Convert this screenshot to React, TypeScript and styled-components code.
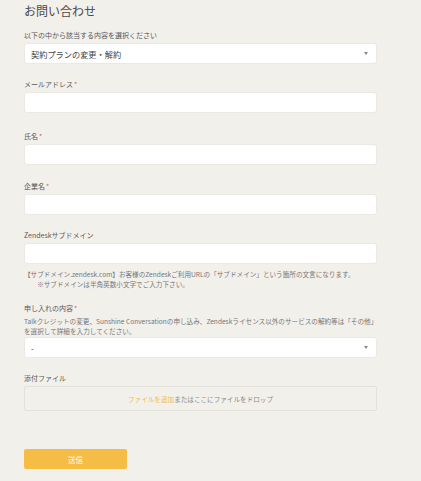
import styled, { createGlobalStyle } from 'styled-components';

const GlobalStyle = createGlobalStyle`
  html, body {
    margin: 0;
    padding: 0;
    background: #f2f0eb;
  }
  body {
    font-family: 'Noto Sans CJK JP', 'Noto Sans', sans-serif;
    color: #555;
  }
`;

const Page = styled.div`
  padding: 0 44px 0 24px;
  width: 353px;
`;

const Title = styled.h1`
  margin: 0 0 7px;
  font-size: 12px;
  line-height: 22px;
  font-weight: 400;
  color: #4a4a4a;
`;

const Field = styled.div<{ $gap?: number }>`
  margin-top: ${(p) => p.$gap ?? 14}px;
`;

const Label = styled.div`
  font-size: 7px;
  line-height: 12px;
  margin-bottom: 2px;
  color: #595959;
`;

const Required = styled.span`
  color: #e5554f;
  margin-left: 1px;
`;

const Input = styled.div`
  height: 21px;
  background: #fff;
  border: 1px solid #ebe9e4;
  border-radius: 3px;
  box-sizing: border-box;
`;

const Select = styled(Input)`
  display: flex;
  align-items: center;
  justify-content: space-between;
  padding: 0 8px 0 6px;
  font-size: 8.2px;
  color: #444;
`;

const Caret = styled.span`
  width: 0;
  height: 0;
  border-left: 2.5px solid transparent;
  border-right: 2.5px solid transparent;
  border-top: 3px solid #888;
`;

const Hint = styled.div<{ $top?: number; $bottom?: number }>`
  margin-top: ${(p) => p.$top ?? 5}px;
  margin-bottom: ${(p) => p.$bottom ?? 0}px;
  font-size: 6.6px;
  line-height: 10px;
  color: #777;
`;

const Drop = styled.div`
  height: 25px;
  border: 1px solid #e3e1dc;
  border-radius: 2px;
  box-sizing: border-box;
  display: flex;
  align-items: center;
  justify-content: center;
  font-size: 6.6px;
  color: #888;
`;

const AddLink = styled.span`
  color: #f5bd45;
`;

const Submit = styled.button`
  margin-top: 38px;
  width: 103px;
  height: 20px;
  border: none;
  border-radius: 2px;
  background: #f5bd45;
  color: #fff;
  font-family: inherit;
  font-size: 7.5px;
  padding: 0;
`;

export default function App() {
  return (
    <Page>
      <GlobalStyle />
      <Title>お問い合わせ</Title>
      <Field $gap={0}>
        <Label>以下の中から該当する内容を選択ください</Label>
        <Select>
          <span>契約プランの変更・解約</span>
          <Caret />
        </Select>
      </Field>
      <Field>
        <Label>
          メールアドレス<Required>*</Required>
        </Label>
        <Input />
      </Field>
      <Field $gap={17}>
        <Label>
          氏名<Required>*</Required>
        </Label>
        <Input />
      </Field>
      <Field $gap={15}>
        <Label>
          企業名<Required>*</Required>
        </Label>
        <Input />
      </Field>
      <Field>
        <Label>Zendeskサブドメイン</Label>
        <Input />
        <Hint $top={5}>
          【サブドメイン.zendesk.com】お客様のZendeskご利用URLの「サブドメイン」という箇所の文言になります。
          <br />
          {'\u3000\u3000'}※サブドメインは半角英数小文字でご入力下さい。
        </Hint>
      </Field>
      <Field $gap={13}>
        <Label>
          申し入れの内容<Required>*</Required>
        </Label>
        <Hint $top={0} $bottom={1}>
          Talkクレジットの変更、Sunshine Conversationの申し込み、Zendeskライセンス以外のサービスの解約等は「その他」を選択して詳細を入力してください。
        </Hint>
        <Select>
          <span>-</span>
          <Caret />
        </Select>
      </Field>
      <Field $gap={14}>
        <Label>添付ファイル</Label>
        <Drop>
          <AddLink>ファイルを追加</AddLink>またはここにファイルをドロップ
        </Drop>
      </Field>
      <Submit>送信</Submit>
    </Page>
  );
}
